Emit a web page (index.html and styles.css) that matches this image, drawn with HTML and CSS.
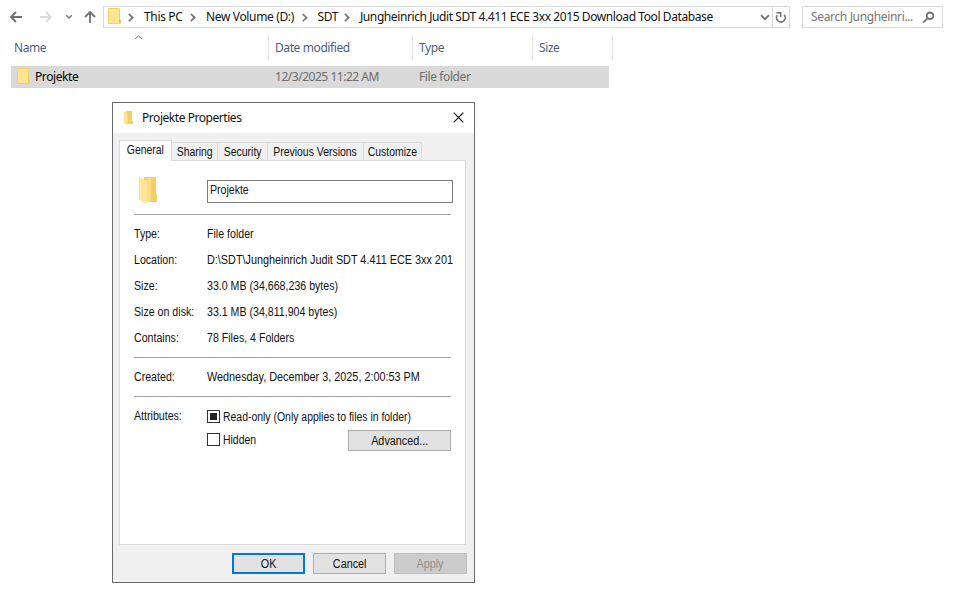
FILE: index.html
```html
<!DOCTYPE html>
<html lang="en">
<head>
    <meta charset="UTF-8">
    <title>Projekte Properties</title>
    <link rel="stylesheet" href="styles.css">
</head>
<body>
<div class="explorer">
    <div class="toolbar">
        <div class="nav">
            <svg class="back" width="14" height="14" viewBox="0 0 14 14"><path d="M13 7H2M7 2L2 7l5 5"/></svg>
            <svg class="forward" width="14" height="14" viewBox="0 0 14 14"><path d="M1 7h11M7 2l5 5-5 5"/></svg>
            <svg class="recent" width="8" height="6" viewBox="0 0 8 6"><path d="M1.2 1.2L4 4l2.8-2.8"/></svg>
            <svg class="up" width="14" height="14" viewBox="0 0 14 14"><path d="M7 13V2M2 7l5-5 5 5"/></svg>
        </div>
        <div class="address">
            <svg class="folder" width="14" height="17" viewBox="0 0 14 17"><path fill="#ffe591" stroke="#f3d069" d="M.5.5h11v10l1 1v4H.5z"/><path d="M11.500 10.500v5"/></svg>
            <ul class="crumbs">
                <li class="c1">This PC</li>
                <li class="c2">New Volume (D:)</li>
                <li class="c3">SDT</li>
                <li class="c4">Jungheinrich Judit SDT 4.411 ECE 3xx 2015 Download Tool Database</li>
            </ul>
            <svg class="drop" width="10" height="7" viewBox="0 0 10 7"><path d="M1 1.200l4 4 4-4"/></svg>
            <div class="refresh">
                <svg width="12" height="13" viewBox="0 0 12 13"><path d="M2.300 4.200A4.300 4.300 0 1 0 9 3.700"/><path d="M1.500 1.700h4.200v4.200"/></svg>
            </div>
        </div>
        <div class="search">
            <span>Search Jungheinri...</span>
            <svg width="13" height="13" viewBox="0 0 13 13"><circle cx="8" cy="4.800" r="3.300"/><path d="M5.600 7.200L1.200 11.600"/></svg>
        </div>
    </div>
    <div class="head">
        <div class="name">Name<svg width="9" height="5" viewBox="0 0 9 5"><path d="M.8 4.300L4.500.8l3.700 3.500"/></svg></div>
        <div class="date">Date modified</div>
        <div class="type">Type</div>
        <div class="size">Size</div>
    </div>
    <div class="row">
        <div class="name">
            <svg class="folder" width="14" height="17" viewBox="0 0 14 17"><path fill="#ffe591" stroke="#f3d069" d="M.5.5h11v10l1 1v4H.5z"/><path d="M11.500 10.500v5"/></svg>
            <span>Projekte</span>
        </div>
        <div class="date">12/3/2025 11:22 AM</div>
        <div class="type">File folder</div>
    </div>
</div>

<div class="dialog">
    <div class="title">
        <svg class="open" width="10" height="14" viewBox="0 0 20 28"><path fill="#f5cf66" d="M6 0h12v19l2 1v6H6z"/><path fill="#ffe49a" d="M1 0l8 4v24l-8-4z"/></svg>
        <span>Projekte Properties</span>
        <svg class="close" width="11" height="11" viewBox="0 0 11 11"><path d="M.7.7l9.600 9.600M10.300.7L.7 10.300"/></svg>
    </div>
    <ul class="tabs">
        <li class="t1 current"><span>General</span></li>
        <li class="t2"><span>Sharing</span></li>
        <li class="t3"><span>Security</span></li>
        <li class="t4"><span>Previous Versions</span></li>
        <li class="t5"><span>Customize</span></li>
    </ul>
    <div class="panel">
        <div class="file">
            <svg class="open" width="20" height="28" viewBox="0 0 20 28"><path fill="#f5cf66" d="M6 1h12v17l1 1v7H6z"/><path fill="#f9dc85" d="M9 2h4v24H9z"/><path fill="#ffe49a" d="M1 1l8 4v23l-8-4z"/></svg>
            <div class="input"><span>Projekte</span></div>
        </div>
        <dl class="group info">
            <dt>Type:</dt><dd>File folder</dd>
            <dt>Location:</dt><dd class="long">D:\SDT\Jungheinrich Judit SDT 4.411 ECE 3xx 201</dd>
            <dt>Size:</dt><dd>33.0 MB (34,668,236 bytes)</dd>
            <dt>Size on disk:</dt><dd>33.1 MB (34,811,904 bytes)</dd>
            <dt>Contains:</dt><dd>78 Files, 4 Folders</dd>
        </dl>
        <dl class="group">
            <dt>Created:</dt><dd class="long">Wednesday, December 3, 2025, 2:00:53 PM</dd>
        </dl>
        <div class="group attr">
            <div class="label">Attributes:</div>
            <div class="checks">
                <div class="check"><i class="box mixed"></i><span>Read-only (Only applies to files in folder)</span></div>
                <div class="check"><i class="box"></i><span>Hidden</span><div class="btn advanced"><span>Advanced...</span></div></div>
            </div>
        </div>
    </div>
    <div class="buttons">
        <div class="btn ok"><span>OK</span></div>
        <div class="btn"><span>Cancel</span></div>
        <div class="btn disabled"><span>Apply</span></div>
    </div>
</div>
</body>
</html>
```
FILE: styles.css
```css
* {
    padding: 0;
    margin: 0;
    list-style: none;
    box-sizing: border-box;
}

body {
    background: #fff;
    height: 613px;
    overflow: hidden;
    white-space: nowrap;
    font: 12px/16px "Noto Sans", "Open Sans", sans-serif;
    letter-spacing: -.4px;
    color: #111;
}

svg {
    display: block;
    flex: none;
    fill: none;
    stroke: #707070;
    stroke-width: 1.8;
}

/* explorer */
.toolbar {
    display: flex;
    padding-top: 6px;
}

.nav {
    display: flex;
    align-items: center;
    width: 103px;
    height: 22px;
    padding-left: 9px;
}

.nav .forward {
    margin-left: 16px;
    stroke: #d9d9d9;
}

.nav .recent {
    margin-left: 12px;
    stroke: #777;
    stroke-width: 1.5;
}

.nav .up {
    margin-left: 10px;
}

.address {
    display: flex;
    align-items: center;
    width: 687px;
    height: 22px;
    border: 1px solid #d9d9d9;
    padding-left: 4px;
}

.folder {
    stroke: #eec65a;
    stroke-width: 1;
    margin-top: -1px;
}

.crumbs {
    display: flex;
    flex: 1;
}

.crumbs li {
    display: flex;
    align-items: center;
}

.crumbs li:before {
    content: "";
    width: 5px;
    height: 5px;
    border: solid #777;
    border-width: 2px 2px 0 0;
    transform: rotate(45deg) scale(.85);
    margin: 0 11px 0 4px;
}

.crumbs .c1 {
    width: 62px;
    letter-spacing: -.35px;
}

.crumbs .c2 {
    width: 112px;
    letter-spacing: -.35px;
}

.crumbs .c3 {
    width: 42px;
}

.crumbs .c4 {
    letter-spacing: -.41px;
}

.refresh {
    display: flex;
    align-items: center;
    justify-content: center;
    width: 17px;
    height: 20px;
    margin-left: 2px;
    border-left: 1px solid #d9d9d9;
}

.refresh svg {
    stroke-width: 1.5;
}

.search {
    display: flex;
    align-items: center;
    justify-content: space-between;
    width: 141px;
    height: 22px;
    margin-left: 12px;
    padding: 0 7px 0 8px;
    border: 1px solid #d9d9d9;
    color: #757575;
    letter-spacing: -.35px;
}

.head {
    display: flex;
    height: 25px;
    margin-top: 7px;
    color: #4c607a;
}

.head div {
    position: relative;
    line-height: 26px;
    padding-left: 6px;
    border-right: 1px solid #e5e5e5;
}

.head .name {
    width: 269px;
    padding-left: 14px;
}

.head .name svg {
    position: absolute;
    left: 134px;
    top: 0;
    stroke-width: 1;
}

.head .date {
    width: 144px;
}

.head .type {
    width: 120px;
}

.head .size {
    width: 80px;
}

.row {
    display: flex;
    align-items: center;
    width: 598px;
    height: 22px;
    margin: 6px 0 0 11px;
    background: #d9d9d9;
    color: #6d6d6d;
}

.row .name {
    display: flex;
    align-items: center;
    width: 264px;
    padding-left: 6px;
    color: #000;
}

.row .name span {
    margin-left: 4px;
}

.row .date {
    width: 144px;
    letter-spacing: -.47px;
}

/* properties window */
.dialog {
    position: absolute;
    left: 112px;
    top: 102px;
    width: 363px;
    height: 481px;
    background: #f0f0f0;
    border: 1px solid #6b6b6b;
    font-family: "Liberation Sans", Arial, sans-serif;
    letter-spacing: 0;
}

.title {
    display: flex;
    align-items: center;
    height: 30px;
    padding: 0 10px;
    background: #fff;
    font-family: "Noto Sans", "Open Sans", sans-serif;
    letter-spacing: -.45px;
}

.title span {
    flex: 1;
    margin-left: 9px;
}

.title .close {
    margin-top: -2px;
    stroke: #111;
    stroke-width: 1.2;
}

.open {
    stroke: none;
}

.tabs {
    display: flex;
    align-items: flex-end;
    height: 27px;
    padding-left: 6px;
}

.tabs li {
    display: flex;
    justify-content: center;
    height: 18px;
    line-height: 19px;
    border: 1px solid #d9d9d9;
    border-width: 1px 1px 0 0;
}

.tabs span {
    transform: scaleX(.87);
}

.tabs .current {
    position: relative;
    z-index: 1;
    height: 21px;
    line-height: 19px;
    margin-bottom: -1px;
    background: #fff;
    border-left-width: 1px;
}

.tabs .t1 {
    width: 53px;
}

.tabs .t2 {
    width: 46px;
}

.tabs .t3 {
    width: 50px;
}

.tabs .t4 {
    width: 96px;
}

.tabs .t5 {
    width: 58px;
}

.panel {
    width: 347px;
    height: 385px;
    margin-left: 6px;
    padding: 15px 12px 0 14px;
    background: #fff;
    border: 1px solid #d9d9d9;
}

.file {
    display: flex;
    height: 38px;
}

.file .open {
    margin-left: 4px;
}

.input {
    width: 246px;
    height: 23px;
    margin: 4px 0 0 49px;
    padding-left: 2px;
    line-height: 19px;
    border: 1px solid #7a7a7a;
}

.input span {
    display: inline-block;
    transform: scaleX(.88);
    transform-origin: 0 0;
}

.group {
    display: grid;
    grid-template-columns: 73px 1fr;
    align-content: start;
    width: 317px;
    height: 39px;
    padding-top: 6px;
    border-top: 1px solid #a0a0a0;
    line-height: 26px;
}

.group dt,
.group dd,
.label {
    justify-self: start;
    transform: scaleX(.885);
    transform-origin: 0 0;
}

.group .long {
    width: 244px;
    transform: scaleX(.903);
}

.info {
    height: 143px;
}

.attr {
    height: auto;
}

.check {
    display: flex;
    align-items: center;
    width: 244px;
    height: 23px;
    line-height: 16px;
}

.check > span {
    transform: scaleX(.87);
    transform-origin: 0 0;
}

.checks {
    padding-top: 2px;
}

.box {
    width: 13px;
    height: 13px;
    margin-right: 3px;
    border: 1px solid #333;
}

.mixed {
    padding: 2px;
    background: #222 content-box;
}

.btn {
    display: flex;
    justify-content: center;
    width: 73px;
    height: 21px;
    line-height: 20px;
    background: #e1e1e1;
    border: 1px solid #adadad;
}

.btn span {
    transform: scaleX(.9);
}

.advanced {
    width: 103px;
    margin-left: auto;
    margin-top: 1px;
}

.buttons {
    display: flex;
    justify-content: flex-end;
    gap: 8px;
    padding: 8px 7px 0 0;
}

.ok {
    border: 2px solid #0078d7;
    line-height: 18px;
}

.disabled {
    background: #ccc;
    border-color: #bfbfbf;
    color: #8d8d8d;
}
```
